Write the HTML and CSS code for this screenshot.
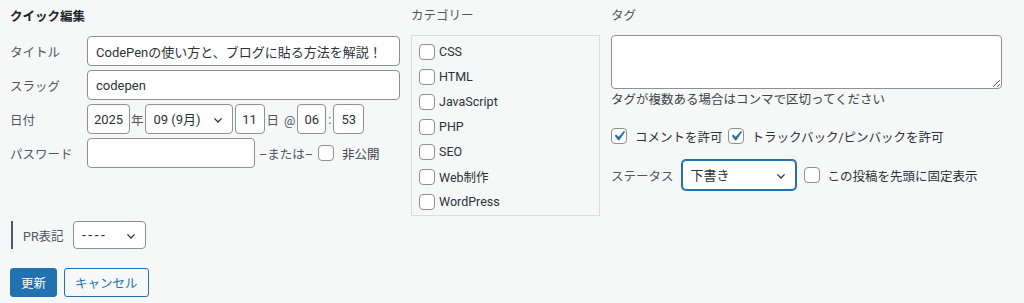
FILE: index.html
```html
<!DOCTYPE html>
<html lang="ja">

<head>
    <meta charset="UTF-8">
    <meta name="viewport" content="width=device-width, initial-scale=1.0">
    <title>クイック編集</title>
    <link rel="stylesheet" href="styles.css">
</head>

<body>
    <div class="quick-edit">
        <div class="columns">
            <!-- Left: basic fields -->
            <div class="col">
                <h3 class="legend main">クイック編集</h3>

                <div class="field first">
                    <span class="title">タイトル</span>
                    <input type="text" class="text wide" value="CodePenの使い方と、ブログに貼る方法を解説！">
                </div>

                <div class="field">
                    <span class="title">スラッグ</span>
                    <input type="text" class="text wide" value="codepen">
                </div>

                <div class="field">
                    <span class="title">日付</span>
                    <input type="text" class="text year" value="2025">
                    <span class="sep">年</span>
                    <select class="month">
                        <option>09 (9月)</option>
                    </select>
                    <input type="text" class="text day" value="11">
                    <span class="sep at">日 @</span>
                    <input type="text" class="text hour" value="06">
                    <span class="sep colon">:</span>
                    <input type="text" class="text minute" value="53">
                </div>

                <div class="field">
                    <span class="title">パスワード</span>
                    <input type="text" class="text password" value="">
                    <span class="or">–または–</span>
                    <input type="checkbox" class="check private">
                    <span>非公開</span>
                </div>
            </div>

            <!-- Middle: categories -->
            <div class="col">
                <h3 class="legend">カテゴリー</h3>
                <ul class="cat-list">
                    <li><input type="checkbox" class="check">CSS</li>
                    <li><input type="checkbox" class="check">HTML</li>
                    <li><input type="checkbox" class="check">JavaScript</li>
                    <li><input type="checkbox" class="check">PHP</li>
                    <li><input type="checkbox" class="check">SEO</li>
                    <li><input type="checkbox" class="check">Web制作</li>
                    <li><input type="checkbox" class="check">WordPress</li>
                </ul>
            </div>

            <!-- Right: tags and status -->
            <div class="col">
                <h3 class="legend">タグ</h3>
                <textarea class="tags"></textarea>
                <p class="howto">タグが複数ある場合はコンマで区切ってください</p>

                <div class="inline-checks">
                    <label><input type="checkbox" class="check" checked>コメントを許可</label>
                    <label><input type="checkbox" class="check" checked>トラックバック/ピンバックを許可</label>
                </div>

                <div class="status-row">
                    <span class="title">ステータス</span>
                    <select class="status">
                        <option>下書き</option>
                    </select>
                    <label><input type="checkbox" class="check">この投稿を先頭に固定表示</label>
                </div>
            </div>
        </div>

        <div class="pr-row">
            <span class="pr-label">PR表記</span>
            <select class="pr-select">
                <option>----</option>
            </select>
        </div>

        <div class="actions">
            <button class="button primary">更新</button>
            <button class="button secondary">キャンセル</button>
        </div>
    </div>
</body>

</html>
```

FILE: styles.css
```css
* {
    margin: 0;
    padding: 0;
    box-sizing: border-box;
}

body {
    font-family: Roboto, "Noto Sans CJK JP", sans-serif;
    font-size: 12.5px;
    color: #3c434a;
    background-color: #f6f7f7;
}

.quick-edit {
    padding: 7px 10px 0;
}

.columns {
    display: grid;
    grid-template-columns: 390px 189px 391px;
    column-gap: 11px;
}

.legend {
    font-size: 12.5px;
    font-weight: normal;
    line-height: 18px;
    height: 18px;
    margin-bottom: 10px;
    color: #50575e;
}

.legend.main {
    font-weight: bold;
    color: #1d2327;
    margin-top: 1px;
}

/* form controls */
input.text,
select,
textarea {
    font-family: inherit;
    font-size: 13px;
    color: #2c3338;
    background-color: #fff;
    border: 1px solid #8c8f94;
    border-radius: 4px;
    outline: none;
}

input.text {
    height: 30px;
    padding: 0 8px;
}

select {
    height: 30px;
    padding: 0 24px 0 8px;
    appearance: none;
    background: #fff url("data:image/svg+xml,%3Csvg xmlns='http://www.w3.org/2000/svg' width='20' height='20'%3E%3Cpath d='M5.5 8l4.5 4.5 4.5-4.5' fill='none' stroke='%232c3338' stroke-width='1.6'/%3E%3C/svg%3E") no-repeat right 6px top 55%;
    background-size: 16px 16px;
}

textarea {
    display: block;
    resize: vertical;
}

.check {
    appearance: none;
    flex: none;
    width: 16px;
    height: 16px;
    border: 1px solid #8c8f94;
    border-radius: 4px;
    background-color: #fff;
}

.check:checked {
    background: #fff url("data:image/svg+xml,%3Csvg xmlns='http://www.w3.org/2000/svg' viewBox='0 0 20 20'%3E%3Cpath d='M14.83 4.89l1.34.94-5.81 8.38H9.02L5.78 9.67l1.34-1.25 2.57 2.4z' fill='%232271b1'/%3E%3C/svg%3E") no-repeat center;
    background-size: 20px 20px;
}

/* left column */
.field {
    display: flex;
    align-items: center;
    height: 30px;
    margin-bottom: 4px;
}

.field.first {
    margin-top: 1px;
}

.field .title {
    flex: none;
    width: 77px;
    color: #50575e;
}

.wide {
    width: 313px;
}

.year {
    width: 43px;
}

.month {
    width: 88px;
}

.day {
    width: 30px;
    margin-left: 2px;
}

.hour {
    width: 29px;
}

.minute {
    width: 31px;
}

input.year,
input.day,
input.hour,
input.minute {
    padding: 0 4px;
    text-align: center;
}

.sep {
    margin: 0 1px;
    color: #50575e;
}

.sep.at {
    margin: 0 2px;
    word-spacing: 2px;
}

.colon {
    margin: 0 2px;
}

.password {
    width: 168px;
}

.or {
    margin-left: 4px;
    color: #50575e;
}

.private {
    margin: 0 8px 0 5px;
}

/* middle column */
.cat-list {
    list-style: none;
    height: 181px;
    padding: 3px 0 0 7px;
    border: 1px solid #dcdcde;
}

.cat-list li {
    display: flex;
    align-items: center;
    gap: 4px;
    height: 25px;
    color: #2c3338;
}

/* right column */
.tags {
    width: 391px;
    height: 54px;
}

.howto {
    margin-top: 2px;
    line-height: 18px;
    color: #3c434a;
}

.inline-checks {
    display: flex;
    gap: 5px;
    height: 18px;
    margin-top: 18px;
}

.inline-checks label,
.status-row label {
    display: flex;
    align-items: center;
    gap: 8px;
    color: #2c3338;
}

.status-row {
    display: flex;
    align-items: center;
    gap: 8px;
    height: 30px;
    margin-top: 15px;
}

.status-row .title {
    color: #50575e;
}

.status {
    width: 114px;
    border-color: #2271b1;
    box-shadow: 0 0 0 1px #2271b1;
}

/* custom field row */
.pr-row {
    display: flex;
    align-items: center;
    height: 28px;
    margin-top: 5px;
    padding-left: 10px;
    border-left: 2px solid #50575e;
    margin-left: 1px;
}

.pr-label {
    width: 50px;
    color: #50575e;
}

.pr-select {
    width: 73px;
    height: 28px;
    font-size: 14px;
    letter-spacing: 2.5px;
}

/* buttons */
.actions {
    display: flex;
    gap: 7px;
    margin-top: 19px;
}

.button {
    height: 29px;
    padding: 0 10px;
    font-family: inherit;
    font-size: 12.5px;
    border: 1px solid #2271b1;
    border-radius: 3px;
    cursor: pointer;
}

.button.primary {
    background-color: #2271b1;
    color: #fff;
}

.button.secondary {
    background-color: #f6f7f7;
    color: #2271b1;
}
```
